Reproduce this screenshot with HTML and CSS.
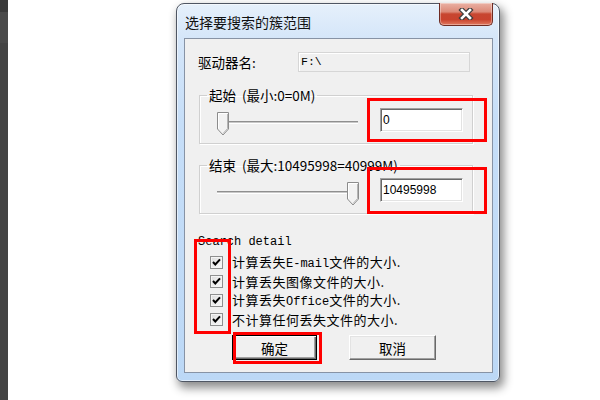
FILE: index.html
```html
<!DOCTYPE html>
<html lang="zh-CN">
<head>
  <meta charset="UTF-8" />
  <title>选择要搜索的簇范围</title>
  <link rel="stylesheet" href="styles.css">
</head>
<body>
  <div class="page">
    <div class="strip"></div>
    <div class="window">
      <div class="titlebar">
        <span class="title">选择要搜索的簇范围</span>
        <button class="close-btn">
          <svg width="16" height="12" viewBox="0 0 16 12">
            <path d="M4 2 L12 10 M12 2 L4 10" stroke="#3c3c3c" stroke-width="5" stroke-linecap="square" />
            <path d="M4 2 L12 10 M12 2 L4 10" stroke="#fff" stroke-width="2.6" stroke-linecap="square" />
          </svg>
        </button>
      </div>
      <div class="panel">
        <div class="drive-row">
          <label>驱动器名:</label>
          <div class="field readonly">F:\</div>
        </div>

        <fieldset class="range">
          <legend>起始&nbsp;&nbsp;(最小:0=0M)</legend>
          <div class="range-body">
            <div class="slider">
              <div class="track"></div>
              <svg class="thumb" style="left: 2px" width="12" height="24" viewBox="0 0 12 24">
                <path d="M0.5 0.5 H11.5 V17 L6 23 L0.5 17 Z" fill="#f2f2f2" stroke="#8c8c8c" />
                <path d="M1.5 1.5 H10.5 M1.5 1.5 V16.5" stroke="#fff" fill="none" />
                <path d="M10.5 2 V16.6 L6 21.5" stroke="#b5b5b5" fill="none" />
              </svg>
            </div>
            <div class="field edit">0</div>
          </div>
        </fieldset>

        <fieldset class="range">
          <legend>结束&nbsp;&nbsp;(最大:10495998=40999M)</legend>
          <div class="range-body">
            <div class="slider">
              <div class="track"></div>
              <svg class="thumb" style="left: 132px" width="12" height="24" viewBox="0 0 12 24">
                <path d="M0.5 0.5 H11.5 V17 L6 23 L0.5 17 Z" fill="#f2f2f2" stroke="#8c8c8c" />
                <path d="M1.5 1.5 H10.5 M1.5 1.5 V16.5" stroke="#fff" fill="none" />
                <path d="M10.5 2 V16.6 L6 21.5" stroke="#b5b5b5" fill="none" />
              </svg>
            </div>
            <div class="field edit">10495998</div>
          </div>
        </fieldset>

        <div class="detail-title">Search detail</div>
        <div class="checks">
          <label class="check"><span class="box"><svg width="11" height="11" viewBox="0 0 11 11"><path d="M2 5 L4.3 7.5 L9 2.3" stroke="#000" stroke-width="2" fill="none" /></svg></span><span>计算丢失<span class="lat">E-mail</span>文件的大小.</span></label>
          <label class="check"><span class="box"><svg width="11" height="11" viewBox="0 0 11 11"><path d="M2 5 L4.3 7.5 L9 2.3" stroke="#000" stroke-width="2" fill="none" /></svg></span><span>计算丢失图像文件的大小.</span></label>
          <label class="check"><span class="box"><svg width="11" height="11" viewBox="0 0 11 11"><path d="M2 5 L4.3 7.5 L9 2.3" stroke="#000" stroke-width="2" fill="none" /></svg></span><span>计算丢失<span class="lat">Office</span>文件的大小.</span></label>
          <label class="check"><span class="box"><svg width="11" height="11" viewBox="0 0 11 11"><path d="M2 5 L4.3 7.5 L9 2.3" stroke="#000" stroke-width="2" fill="none" /></svg></span><span>不计算任何丢失文件的大小.</span></label>
        </div>

        <div class="buttons">
          <button class="btn default">确定</button>
          <button class="btn cancel">取消</button>
        </div>

        <div class="mark mark-start"></div>
        <div class="mark mark-end"></div>
        <div class="mark mark-checks"></div>
        <div class="mark mark-ok"></div>
      </div>
    </div>
  </div>
</body>
</html>
```

FILE: styles.css
```css
body {
  margin: 0;
  background: #fff;
  font-family: "Noto Sans CJK SC", "Liberation Sans", sans-serif;
  font-size: 13.5px;
  color: #000;
}
.page {
  display: flex;
  align-items: flex-start;
  height: 400px;
  overflow: hidden;
}
.strip {
  width: 8px;
  height: 400px;
  flex: none;
  background: linear-gradient(#3a3a3a 0 12px, #4a4a4a 12px 43px, #444 43px);
}
.window {
  box-sizing: border-box;
  width: 324px;
  height: 379px;
  margin: 3px 0 0 168px;
  padding: 0 6px 8px 7px;
  display: flex;
  flex-direction: column;
  border: 1px solid #4f5663;
  border-radius: 8px 8px 6px 6px;
  background: linear-gradient(#e6f0fb 0, #d5e6f9 34px, #c6def8 120px, #bcd8f6 100%);
  box-shadow: inset 0 0 0 1px rgba(255,255,255,0.55), 3px 5px 10px 1px rgba(0,0,0,0.45);
}
.titlebar {
  height: 34px;
  display: flex;
  align-items: center;
  flex: none;
}
.title {
  margin: 1px 0 0 1px;
  font-size: 14px;
  line-height: 18px;
  color: #111;
}
.close-btn {
  align-self: flex-start;
  margin: -1px 0 0 auto;
  width: 54px;
  height: 23px;
  padding: 0;
  display: flex;
  align-items: center;
  justify-content: center;
  border: 1px solid #6e2b22;
  border-top: none;
  border-radius: 0 0 5px 5px;
  background: linear-gradient(#eab1a4 0, #dc8a78 40%, #c74630 50%, #c9432e 75%, #e0795f 100%);
  box-shadow: inset 0 0 0 1px rgba(255,255,255,0.35);
}
.panel {
  flex: 1;
  position: relative;
  padding: 13px 0 0 13px;
  border: 1px solid #8793a5;
  background: #f0f0f0;
}
.drive-row {
  display: flex;
  align-items: center;
  height: 20px;
}
.drive-row label {
  width: 100px;
  line-height: 16px;
}
.field {
  box-sizing: border-box;
}
.field.readonly {
  width: 172px;
  height: 20px;
  padding-left: 2px;
  border: 1px solid #d6d6d6;
  box-shadow: inset 1px 1px 0 #fff;
  font-family: "Liberation Mono", monospace;
  font-size: 11.5px;
  line-height: 18px;
}
.range {
  box-sizing: border-box;
  width: 274px;
  margin: 15px 0 0 1px;
  padding: 0;
  border: 1px solid #d0d0d0;
  box-shadow: inset 1px 1px 0 #fff, 1px 1px 0 #fff;
}
.range + .range {
  margin-top: 13px;
}
.range legend {
  margin-left: 7px;
  padding: 0 2px;
  line-height: 16px;
  white-space: nowrap;
}
.range-body {
  display: flex;
  align-items: flex-start;
  gap: 20px;
  padding: 5px 9px 7px 15px;
}
.slider {
  position: relative;
  width: 145px;
  height: 24px;
  margin-top: 4px;
}
.track {
  position: absolute;
  left: 2px;
  right: 2px;
  top: 9px;
  height: 1px;
  border-top: 1px solid #8f8f8f;
  border-bottom: 1px solid #fff;
  background: #c8c8c8;
}
.thumb {
  position: absolute;
  top: 0;
}
.field.edit {
  width: 83px;
  height: 24px;
  padding-left: 2px;
  border: 1px solid;
  border-color: #a0a0a0 #fff #fff #a0a0a0;
  box-shadow: inset 1px 1px 0 #696969, inset -1px -1px 0 #e3e3e3;
  background: #fff;
  font-family: "Liberation Sans", sans-serif;
  font-size: 12px;
  line-height: 22px;
}
.detail-title {
  margin-top: 20px;
  font-family: "Liberation Mono", monospace;
  font-size: 12px;
  line-height: 16px;
}
.checks {
  margin-top: 3px;
}
.check {
  display: flex;
  align-items: center;
  height: 19px;
  padding-left: 12px;
  font-size: 13px;
  letter-spacing: 0.5px;
  line-height: 16px;
}
.lat {
  font-family: "Liberation Mono", monospace;
  font-size: 12px;
  letter-spacing: 0;
}
.box {
  box-sizing: border-box;
  width: 13px;
  height: 13px;
  margin-right: 9px;
  display: flex;
  align-items: center;
  justify-content: center;
  border: 1px solid #8e8f8f;
  background: linear-gradient(135deg, #dcdcdc, #fbfbfb);
  box-shadow: inset 0 0 0 1px #f4f4f4;
}
.buttons {
  display: flex;
  gap: 32px;
  margin: 6px 0 0 34px;
}
.btn {
  box-sizing: border-box;
  width: 87px;
  height: 25px;
  padding: 0;
  font-family: "Noto Sans CJK SC", sans-serif;
  font-size: 13.5px;
  line-height: 16px;
  color: #000;
  background: #f0f0f0;
  border: 1px solid;
  border-color: #fff #696969 #696969 #fff;
  box-shadow: inset -1px -1px 0 #a0a0a0, inset 1px 1px 0 #e3e3e3;
}
.btn.default {
  width: 85px;
  border-color: #000;
  box-shadow: inset 1px 1px 0 #fff, inset -1px -1px 0 #696969, inset -2px -2px 0 #a0a0a0;
}
.mark {
  position: absolute;
  box-sizing: border-box;
  border: 3px solid #f00;
}
.mark-start { left: 182px; top: 59px; width: 120px; height: 44px; }
.mark-end { left: 182px; top: 128px; width: 120px; height: 47px; }
.mark-checks { left: 9px; top: 200px; width: 37px; height: 95px; }
.mark-ok { left: 48px; top: 293px; width: 89px; height: 32px; }
```
